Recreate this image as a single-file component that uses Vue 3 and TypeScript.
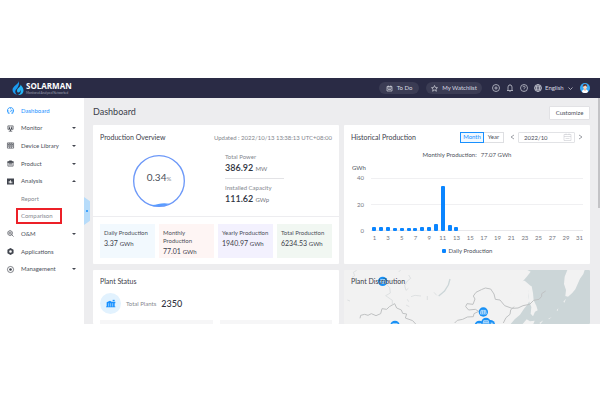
<script setup lang="ts">
import { ref } from 'vue'

interface NavItem {
  label: string
  icon?: string
  arrow?: 'up' | 'down'
  active?: boolean
  marked?: boolean
}

const nav: NavItem[] = [
  { label: 'Dashboard', icon: 'dashboard', active: true },
  { label: 'Monitor', icon: 'monitor', arrow: 'down' },
  { label: 'Device Library', icon: 'library', arrow: 'down' },
  { label: 'Product', icon: 'product', arrow: 'down' },
  { label: 'Analysis', icon: 'analysis', arrow: 'up' },
  { label: 'Report' },
  { label: 'Comparison', marked: true },
  { label: 'O&M', icon: 'om', arrow: 'down' },
  { label: 'Applications', icon: 'apps' },
  { label: 'Management', icon: 'management', arrow: 'down' },
]

const stats = [
  { label: 'Daily Production', value: '3.37', tone: 'blue' },
  { label: 'Monthly Production', value: '77.01', tone: 'red' },
  { label: 'Yearly Production', value: '1940.97', tone: 'violet' },
  { label: 'Total Production', value: '6234.53', tone: 'green' },
]

const daily = [3.3, 3.3, 2.8, 2.6, 2.3, 2.2, 2.6, 3.2, 2.8, 5, 34, 4.2, 2.8]
const days = Array.from({ length: 31 }, (_, i) => ({ day: i + 1, value: daily[i] ?? 0 }))
const range = ref('Month')
const month = ref('2022/10')
</script>

<template>
  <div class="shell">
    <header class="topbar">
      <a class="brand" href="#">
        <svg class="flame" viewBox="0 0 24 28" aria-hidden="true">
          <path d="M14 0C13 7 1 10 1 18c0 5 4 9 10 10-5-3-6-8-2-12C12 12 15 8 14 0z" fill="#1b9cf2" />
          <path d="M17 7c1 5-7 7-7 12 0 3 1 4 3 4 3 0 4-3 3-6 3 4 1 10-5 11 8 1 12-4 12-9 0-5-3-8-6-12z" fill="#25b5f5" />
        </svg>
        <span class="brand-text">
          <strong>SOLARMAN</strong>
          <small>Monitored Analyzed Networked</small>
        </span>
      </a>
      <div class="tools">
        <button class="pill todo" type="button">
          <svg viewBox="0 0 14 14" aria-hidden="true"><path d="M2 3h10v9H2zM2 6h10M4.500 1v3M9.500 1v3M4 9h6" /></svg>
          To Do
        </button>
        <button class="pill watch" type="button">
          <svg viewBox="0 0 14 14" aria-hidden="true"><path d="M7 1l1.800 4 4.200.4-3.200 2.800 1 4.300L7 10.200 3.200 12.500l1-4.300L1 5.400 5.200 5z" /></svg>
          My Watchlist
        </button>
        <button class="tool" type="button" aria-label="Add">
          <svg viewBox="0 0 16 16"><circle cx="8" cy="8" r="7" /><path d="M4.500 8h7M8 4.500v7" /></svg>
        </button>
        <button class="tool" type="button" aria-label="Notifications">
          <svg viewBox="0 0 16 16"><path d="M2 13h12M4 13V6a4 4 0 0 1 8 0v7M7 15h2M8 1v1" /></svg>
        </button>
        <button class="tool" type="button" aria-label="Help">
          <svg viewBox="0 0 16 16"><circle cx="8" cy="8" r="7" /><path d="M5.800 6.500a2.200 2.200 0 1 1 3.200 2c-.8.400-1 .700-1 1.500M8 11.500v1" /></svg>
        </button>
        <label class="language">
          <svg viewBox="0 0 16 16" aria-hidden="true"><circle cx="8" cy="8" r="7" /><ellipse cx="8" cy="8" rx="3" ry="7" /><path d="M1 8h14M2 4.500h12M2 11.500h12" /></svg>
          <select aria-label="Language"><option>English</option></select>
          <svg class="chevron" viewBox="0 0 10 10" aria-hidden="true"><path d="M1 3l4 4 4-4" /></svg>
        </label>
        <button class="avatar" type="button" aria-label="Account">
          <svg viewBox="0 0 20 20">
            <circle cx="10" cy="10" r="10" fill="#37a8f5" />
            <path d="M4 18c0-4 2-5 6-5s6 1 6 5a10 10 0 0 1-12 0z" fill="#fff" />
            <path d="M8 11h4v3l-2 2-2-2z" fill="#f3b394" />
            <circle cx="10" cy="8" r="4" fill="#fcd2b5" />
            <path d="M5.500 8C5 3 8 2 10 2s5 1 4.500 6C13 7 12 6 11 5 9 7 7 6 5.500 8z" fill="#5e3a3a" />
          </svg>
        </button>
      </div>
    </header>

    <div class="body">
      <aside class="sidebar">
        <nav>
          <a v-for="item in nav" :key="item.label" href="#" class="nav-item" :class="{ active: item.active, sub: !item.icon, marked: item.marked }">
            <svg v-if="item.icon" class="nav-icon" viewBox="0 0 16 16" aria-hidden="true">
              <path v-if="item.icon === 'dashboard'" d="M4 14A7 7 0 1 1 12 14M8 11l3-5M3 9h2M8 3v2M11 9h2M2 14h4M10 14h4" class="line" />
              <g v-else-if="item.icon === 'monitor'"><path d="M2 2h12v8H2z" class="line" /><path d="M4 4h3v2H4zM9 4h3v2H9zM4 7h3v2H4zM9 7h3v2H9zM7 10h2v3H7zM4 13h8v2H4z" /></g>
              <g v-else-if="item.icon === 'library'"><path d="M1 2h14v12H1zM6 2v12M10 2v12" class="line" /><path d="M2 4h3v2H2zM7 4h2v2H7zM11 4h3v2h-3zM2 8h3v2H2zM7 8h2v2H7zM11 8h3v2h-3z" /></g>
              <g v-else-if="item.icon === 'product'"><path d="M2 5h12v9H2zM4 8h8M4 11h8" class="line" /><path d="M5 1h6v2h4v3H1V3h4z" /></g>
              <path v-else-if="item.icon === 'analysis'" fill-rule="evenodd" d="M0 1h16v14H0zM4 7v5h2V7zM7 5v7h2V5zM10 8v4h2V8z" />
              <g v-else-if="item.icon === 'om'"><path d="M7 1l5 3v6l-5 3-5-3V4zM10 10l5 5" class="line" /><circle cx="7" cy="7" r="2.500" class="line" /></g>
              <path v-else-if="item.icon === 'apps'" fill-rule="evenodd" d="M8 0l7 4v8l-7 4-7-4V4zM8 5a3 3 0 1 0 0 6 3 3 0 0 0 0-6z" />
              <g v-else><circle cx="8" cy="8" r="7" class="line" /><circle cx="8" cy="8" r="3" /></g>
            </svg>
            <span class="nav-label">{{ item.label }}</span>
            <i v-if="item.arrow" class="caret" :class="item.arrow"></i>
          </a>
        </nav>
        <button class="collapse" type="button" aria-label="Collapse sidebar"><i></i></button>
      </aside>

      <main class="main">
        <div class="page-head">
          <h1>Dashboard</h1>
          <button class="customize" type="button">Customize</button>
        </div>
        <div class="cards">
          <section class="card overview">
            <div class="card-head">
              <h2>Production Overview</h2>
              <span class="updated">Updated : 2022/10/13 13:38:13 UTC+08:00</span>
            </div>
            <div class="summary">
              <div class="gauge">
                <svg viewBox="0 0 156 156" aria-hidden="true">
                  <circle cx="78" cy="78" r="76" fill="none" stroke="#6c98f8" stroke-width="4" />
                  <path d="M46 149q16 2 30-2t34-1q-28 14-64 3z" fill="#5a9cff" />
                </svg>
                <span>0.34<small>%</small></span>
              </div>
              <dl class="metrics">
                <div><dt>Total Power</dt><dd>386.92 <small>MW</small></dd></div>
                <div><dt>Installed Capacity</dt><dd>111.62 <small>GWp</small></dd></div>
              </dl>
            </div>
            <div class="stats">
              <div v-for="s in stats" :key="s.label" class="stat" :class="s.tone">
                <span>{{ s.label }}</span>
                <b>{{ s.value }} <small>GWh</small></b>
              </div>
            </div>
          </section>

          <section class="card history">
            <div class="card-head">
              <h2>Historical Production</h2>
              <div class="controls">
                <div class="segment">
                  <button v-for="r in ['Month', 'Year']" :key="r" type="button" :class="{ on: range === r }" @click="range = r">{{ r }}</button>
                </div>
                <button class="step" type="button" aria-label="Previous month"><svg viewBox="0 0 10 10"><path d="M8 1L2 5l6 4" /></svg></button>
                <label class="date">
                  <input v-model="month" type="text" aria-label="Month">
                  <svg viewBox="0 0 16 16" aria-hidden="true"><path d="M1 3h14v12H1zM1 7h14M5 1v3M11 1v3M4 11h8" /></svg>
                </label>
                <button class="step" type="button" aria-label="Next month"><svg viewBox="0 0 10 10"><path d="M2 1l6 4-6 4" /></svg></button>
              </div>
            </div>
            <p class="chart-title"><span>Monthly Production:</span><span>77.07 GWh</span></p>
            <div class="unit">GWh</div>
            <div class="chart">
              <div class="y-axis"><span>40</span><span>20</span><span>0</span></div>
              <div class="plot">
                <div v-for="d in days" :key="d.day" class="slot"><i v-if="d.value" :style="{ height: d.value * 2.5 + '%' }"></i></div>
              </div>
              <div class="x-axis">
                <span v-for="d in days" :key="d.day">{{ d.day % 2 ? d.day : '' }}</span>
              </div>
            </div>
            <div class="legend"><i></i>Daily Production</div>
          </section>

          <section class="card status">
            <h2>Plant Status</h2>
            <div class="plants">
              <span class="plant-icon">
                <svg viewBox="0 0 30 26" aria-hidden="true"><path d="M2 9l10-4 5 3h11v4h-2v10h2v2H0v-2h2z" fill="#1890ff" /><path d="M20 2h6v4h-6z" fill="#1890ff" /><path d="M8 12v10M14 12v10M20 12v10" stroke="#bfe2ff" stroke-width="2" /></svg>
              </span>
              <span class="plants-label">Total Plants</span>
              <strong>2350</strong>
            </div>
            <div class="placeholders"><i></i><i></i></div>
          </section>

          <section class="card distribution">
            <h2>Plant Distribution</h2>
            <svg class="map" viewBox="12 45 738 162" preserveAspectRatio="none" aria-hidden="true">
              <path class="sea" d="M562 45H750V207H512l12-14 16-14 12-18 10-12 6-10-4-16 0-18-8-6-10 8-16-6 8-10 12-14 12-14 10-13z" />
              <path class="land" d="M682 45h52l-4 12-10 14-8 18-6 14-10 12-12 10-8-2 2-18-6-18 2-22z" />
              <path class="land" d="M567 90l8 4 4 20 2 22 8 16 4 14-8 4-6 14-7-8 2-20-8-20-2-24z" />
              <path class="land" d="M520 85l34-8 14 12 4 8-10 16-2 24-18 20-18 26-14 24h-20l12-50z" />
              <path class="land" d="M548 207l12-14 10 6 14-2-4 10zM598 204l12-8-8 10zM625 191l10-5-8 7zM650 166l5-6-2 8zM670 140l8-9-5 12z" />
              <path class="border" d="M60 190l2-9 12-3 10 3 10-5 14 6 14-6 4-15 14 2 8-8 16-9 6 13 14 6 4 10 12 2-4 12 22 8 9 10" />
              <path class="border" d="M344 204l8-8 16-3 14-7 18-1 2-9 14-7-10-6-20 2-9-10 4-9 18 2 6-16-5-9 8-11 16-8 12-5 16 3 10 15 4 16 14 2 14 17 22 8 18-1 15-7 20-4 12-12 16-3 8-9 0-8 12-8M490 204l8-16 12-10 2-13 10-10" />
              <path class="faint" d="M50 46l-10 6 4 10-8 5M135 84l14 14 2 16-14 8 20 14 0 14M206 60l6 10-10 8-8 14 4 14 7-6M213 125l12-4 18 2M282 112l8 9M262 123v12M22 135l8 3M202 133l4 7M198 150l10 5M176 51l6-6" />
              <path class="lake" d="M330 72l-5 18-12 19-17 14" />
              <g v-for="p in [[128, 79], [430, 171], [165, 211], [418, 211], [451, 209], [438, 202]]" :key="p.join()" :transform="`translate(${p[0]} ${p[1]})`">
                <circle r="14" fill="#1890f5" />
                <path d="M-7-5H7L9 6H-9zM-8 0H8M-3-5v11M3-5v11" fill="#1890f5" stroke="#e3f1fd" stroke-width="2" />
              </g>
            </svg>
          </section>
        </div>
        <div class="scrollbar"></div>
      </main>
    </div>
  </div>
</template>

<style>
body { margin: 0; background: #fff; }
</style>

<style scoped>
* { box-sizing: border-box; }
.shell { height: 100vh; padding: 78px 0 76px; display: flex; flex-direction: column; font: 7px/8px Lato, "Noto Sans", sans-serif; color: #4b4f59; }
button, input, select { font: inherit; color: inherit; border: 0; padding: 0; margin: 0; background: none; appearance: none; }
a { color: inherit; text-decoration: none; }
h1, h2, p, dl, dd { margin: 0; font-weight: 400; }
svg { display: block; fill: none; stroke-linejoin: round; }

.topbar { flex: none; height: 20px; padding: 0 10px 0 12px; display: flex; justify-content: space-between; align-items: center; background: #2a2b45; color: #d6d7e0; }
.brand { display: flex; align-items: center; gap: 2px; }
.flame { width: 12px; height: 14px; }
.brand-text { display: flex; flex-direction: column; color: #fff; }
.brand-text strong { font: 700 8px/10px "Open Sans", sans-serif; }
.brand-text small { font-size: 3px; line-height: 5px; color: #9fa1b3; }
.tools { display: flex; align-items: center; }
.tools svg { width: 8px; height: 8px; stroke: currentColor; stroke-width: 1.4; }
.pill { display: flex; justify-content: center; align-items: center; gap: 4px; height: 12px; border-radius: 6px; background: #3b3c54; font-size: 6px; }
.pill svg { width: 7px; height: 7px; }
.todo { width: 40px; margin-right: 7px; }
.watch { width: 56px; margin-right: 10px; }
.tool { margin-right: 6px; }
.language { display: flex; align-items: center; gap: 3px; margin-right: 7px; }
.language select { width: 20px; font-size: 6px; line-height: 8px; }
.language .chevron { width: 5px; height: 5px; }
.avatar svg { width: 10px; height: 10px; stroke: none; }

.body { flex: 1; min-height: 0; display: flex; }
.sidebar { position: relative; flex: none; width: 84px; padding-top: 4px; background: #fff; }
nav { display: grid; grid-auto-rows: 1fr; height: 176px; }
.nav-item { display: flex; align-items: center; padding: 0 8px 0 7px; font-size: 6px; }
.nav-icon { width: 7px; height: 7px; margin-right: 7px; fill: #41454e; overflow: visible; }
.nav-icon .line { fill: none; stroke: #41454e; stroke-width: 1.5; }
.active { color: #1890ff; }
.active .nav-icon .line { stroke: #1890ff; stroke-width: 2; }
.sub { color: #85888f; padding-left: 16px; }
.sub .nav-label { width: 46px; padding-left: 3px; line-height: 12px; border: 2px solid transparent; }
.marked .nav-label { border-color: #ec2028; }
.caret { margin-left: auto; border: 2px solid transparent; }
.caret.down { border-top-color: #41454e; border-bottom: 0; }
.caret.up { border-bottom-color: #41454e; border-top: 0; }
.collapse { position: absolute; z-index: 1; top: 99px; left: 100%; width: 6px; height: 28px; background: #b7dcfa; clip-path: polygon(0 0, 100% 15%, 100% 85%, 0 100%); }
.collapse i { display: block; width: 2px; height: 2px; margin-left: 2px; background: #1890ff; border-radius: 1px; }

.main { position: relative; flex: 1; min-width: 0; overflow: hidden; padding: 0 10px 0 9px; background: #ededef; }
.page-head { display: flex; align-items: center; justify-content: space-between; height: 27px; }
h1 { font-size: 9px; line-height: 12px; color: #3a3e49; }
.customize { width: 41px; height: 14px; margin-top: 2px; background: #fff; border: 1px solid #e2e2e5; border-radius: 1px; font-size: 6px; }
.cards { display: grid; grid-template-columns: 1fr 1fr; grid-template-rows: auto 54px; gap: 6px 5px; }
.card { min-width: 0; background: #fff; border-radius: 1px; padding: 7px 7px 6px; }
h2 { font-size: 7px; line-height: 9px; color: #3c404a; white-space: nowrap; }
.card-head { display: flex; justify-content: space-between; align-items: center; height: 10px; white-space: nowrap; }
.updated { color: #83868e; font-size: 6px; margin-top: 2px; }

.overview { display: flex; flex-direction: column; }
.summary { display: grid; grid-template-columns: 118px 1fr; align-items: center; height: 75px; margin: 0 -7px; padding: 0 7px; border-bottom: 1px solid #ededf0; }
.gauge { display: grid; place-items: center; }
.gauge > * { grid-area: 1 / 1; }
.gauge svg { width: 52px; height: 52px; margin-top: 4px; }
.gauge span { font-size: 10px; line-height: 12px; padding-bottom: 3px; }
.gauge small { font-size: 6px; color: #85888f; }
.metrics { padding-left: 7px; width: 66px; }
.metrics div + div { border-top: 1px solid #e3e3e6; padding-top: 4px; margin-top: 2px; }
dt { color: #85888f; font-size: 6px; line-height: 9px; white-space: nowrap; }
dd { font-size: 9px; line-height: 14px; font-weight: 600; color: #30343f; white-space: nowrap; }
dd small { font-size: 6px; font-weight: 400; color: #73767e; }
.stats { display: grid; grid-template-columns: repeat(4, 1fr); gap: 4px; padding-top: 7px; }
.stat { height: 34px; padding: 5px 4px 0; font-size: 6px; }
.stat span { display: block; }
.stat b { display: block; font-size: 7px; line-height: 13px; font-weight: 400; white-space: nowrap; color: #3c404a; }
.stat small { font-size: 6px; font-weight: 400; }
.blue { background: #f2f9fe; }
.red { background: #fef5f4; }
.violet { background: #f3f1fe; }
.green { background: #f1f7f2; }

.controls { display: flex; align-items: center; gap: 3px; }
.segment { display: flex; margin-right: 3px; font-size: 6px; }
.segment button { height: 11px; width: 20px; border: 1px solid #dedfe2; border-left: 0; }
.segment button:first-child { width: 24px; border-left: 1px solid #dedfe2; }
.segment button.on { border: 1px solid #1890ff; color: #1890ff; background: #f0f8ff; }
.step svg { width: 5px; height: 6px; stroke: #83868e; stroke-width: 1.5; }
.date { display: flex; align-items: center; width: 57px; height: 11px; padding: 0 2px 0 5px; border: 1px solid #e2e3e6; border-radius: 1px; }
.date input { flex: 1; min-width: 0; height: 9px; font-size: 6px; outline: 0; }
.date svg { width: 9px; height: 8px; stroke: #c0c2c8; }
.chart-title { display: flex; justify-content: center; gap: 4px; margin-top: 9px; font-size: 6px; }
.unit { margin-top: 5px; padding-left: 1px; font-size: 6px; }
.chart { display: grid; grid-template-columns: 13px 1fr; grid-template-rows: 53px 12px; column-gap: 7px; margin-top: 6px; font-size: 6px; color: #73767e; }
.y-axis { display: flex; flex-direction: column; justify-content: space-between; margin: -4px 0; text-align: right; }
.plot { display: grid; grid-template-columns: repeat(31, 1fr); align-items: end; background: linear-gradient(#f0f0f2, #f0f0f2) 0 0 / 100% 1px no-repeat, linear-gradient(#f0f0f2, #f0f0f2) 0 50% / 100% 1px no-repeat, linear-gradient(#e8e8eb, #e8e8eb) 0 100% / 100% 1px no-repeat; }
.slot { height: 100%; display: flex; align-items: flex-end; justify-content: center; }
.slot i { width: 4px; background: #0a85ff; border-radius: 1px; }
.x-axis { grid-column: 2; display: grid; grid-template-columns: repeat(31, 1fr); padding-top: 3px; }
.x-axis span { display: flex; justify-content: center; min-width: 0; }
.legend { display: flex; justify-content: center; align-items: center; gap: 3px; margin-top: 4px; font-size: 6px; }
.legend i { width: 4px; height: 4px; border-radius: 1px; background: #0a85ff; }

.plants { display: flex; align-items: center; gap: 5px; margin-top: 7px; }
.plant-icon { display: grid; place-items: center; width: 21px; height: 21px; border-radius: 50%; background: #e2f2fe; }
.plant-icon svg { width: 10px; height: 9px; }
.plants-label { font-size: 6px; color: #85888f; }
.plants strong { font-size: 9px; font-weight: 500; color: #30343f; }
.placeholders { display: grid; grid-template-columns: 1fr 1fr; gap: 7px; margin-top: 6px; }
.placeholders i { height: 6px; background: #f6f6f7; }
.distribution { position: relative; overflow: hidden; background: #f2f2f2; }
.distribution h2 { position: relative; z-index: 1; }
.map { position: absolute; inset: 0; width: 100%; height: 100%; }
.sea { fill: #ccd6d8; }
.land { fill: #f2f2f2; }
.border { stroke: #bfc1c2; stroke-width: 3; }
.faint { stroke: #d3d8d9; stroke-width: 2; }
.lake { stroke: #ccd6d8; stroke-width: 4; }
.scrollbar { position: absolute; top: 0; right: 0; width: 2px; height: 110px; background: #c3c3c6; }
</style>
